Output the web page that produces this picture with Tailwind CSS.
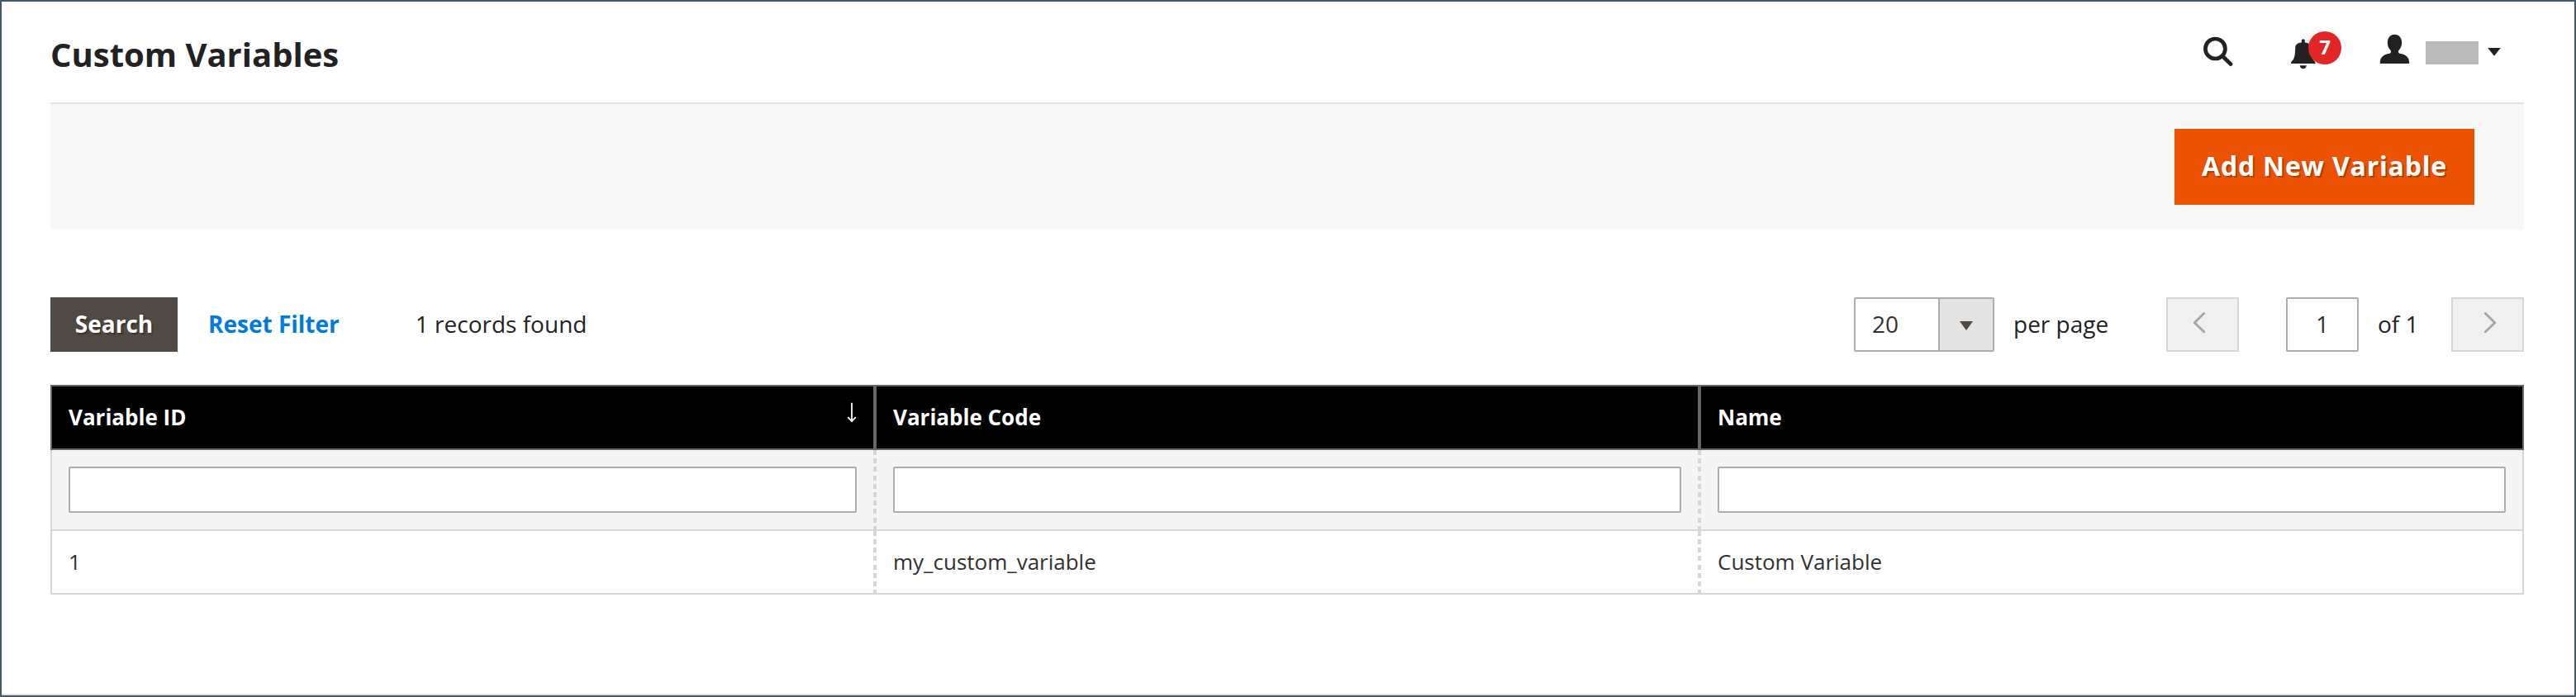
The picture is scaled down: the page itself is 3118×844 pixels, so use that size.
<!DOCTYPE html>
<html lang="en">
<head>
<meta charset="utf-8">
<title>Custom Variables</title>
<script src="https://cdn.jsdelivr.net/npm/@tailwindcss/browser@4"></script>
</head>
<body class="bg-white">
<div class="h-[844px] w-[3118px] overflow-hidden border-2 border-[#455a64] font-['Open_Sans','Noto_Sans',sans-serif] text-[28px] leading-none text-[#222]">
 <div class="flex h-[840px] flex-col border-b-2 border-[#dfe0e0] pr-[61px] pl-[59px]">
  <header class="flex h-[124px] shrink-0 items-start justify-between border-b-2 border-[#e3e3e3]">
    <h1 class="mt-[37px] text-[40px] leading-[54px] font-bold">Custom Variables</h1>
    <div class="mr-[28px] flex items-start">
      <svg class="mt-[42px] mr-[70px] h-[37px] w-[36px]" viewBox="0 0 36 37" fill="none" stroke="#222">
        <circle cx="14.4" cy="15" r="12" stroke-width="4.7"/>
        <path d="M23.2 24 33 33.6" stroke-width="4.8" stroke-linecap="round"/>
      </svg>
      <div class="relative mt-[36px] mr-[46px] h-[46px] w-[61px]">
        <svg class="mt-[9px] h-[37px] w-[30px]" viewBox="0 0 30 37" fill="#222">
          <path d="M12.8 4.6V2.2a2 2 0 0 1 4 0v2.4c4.2.4 7.2 2 7.4 6.2.3 8.200.6 13 4.200 16.200.8.7 1.200 1.500 1.200 3H0c0-1.500.4-2.300 1.100-3C4.700 23.800 5 19 5.200 10.800c.2-4.200 3.400-5.800 7.600-6.200Z"/>
          <path d="M10.600 32.200h8.300c-.6 2.500-2 4-4.150 4s-3.550-1.500-4.150-4Z"/>
        </svg>
        <span class="absolute top-0 right-0 flex size-10 items-center justify-center rounded-full bg-[#e22626] pb-[2px] text-[24px] font-bold text-white">7</span>
      </div>
      <svg class="mt-[39px] mr-[19px] h-[37px] w-[37px]" viewBox="0 0 37 37" fill="#222">
        <path d="M18.500.700c5.300 0 8.600 4 8.600 9.800 0 4.200-1.200 6.900-3.300 9-.8.8-.9 1.900-.6 2.900.4 1 1.400 1.400 2.700 1.600 6 .8 10.300 5.200 10.300 10.600 0 1-.5 1.500-1.500 1.500H2.300c-1 0-1.500-.5-1.500-1.500C.8 29.200 5.100 24.800 11.100 24c1.300-.2 2.300-.6 2.700-1.600.3-1 .2-2.100-.6-2.900-2.100-2.100-3.300-4.800-3.300-9C9.900 4.700 13.200.7 18.500.7Z"/>
      </svg>
      <div class="mt-[48px] h-7 w-16 bg-[#bababa]"></div>
      <svg class="mt-[56px] ml-[11px] h-[10px] w-4" viewBox="0 0 16 10" fill="#222"><path d="M.2 0h15.600L8 9.800Z"/></svg>
    </div>
  </header>

  <section class="flex h-[152px] shrink-0 items-center justify-end bg-[#f8f8f8] pr-[60px]">
    <button class="h-[92px] w-[363px] bg-[#eb5202] pb-[3px] text-[32px] font-bold tracking-[0.8px] text-white [text-shadow:2px_2px_0_rgba(0,0,0,0.25)]">Add New Variable</button>
  </section>

  <section class="mt-[82px] flex h-[66px] shrink-0 items-center justify-between">
    <div class="flex h-full items-center">
      <button class="h-full w-[154px] bg-[#514943] pb-[2px] font-bold text-white [text-shadow:2px_2px_2px_rgba(0,0,0,0.3)]">Search</button>
      <a class="ml-[37px] pb-[2px] font-bold text-[#007bdb]">Reset Filter</a>
      <span class="ml-[92px] pb-[2px]">1 records found</span>
    </div>
    <div class="flex h-full items-center">
      <div class="flex h-full w-[170px] overflow-hidden rounded-[2px] border-2 border-[#adadad] text-[#303030]">
        <div class="flex flex-1 items-center pb-[2px] pl-5">20</div>
        <div class="flex w-[66px] items-center justify-center border-l-2 border-[#adadad] bg-[#e3e3e3]">
          <svg class="mt-[2px] h-[11px] w-4" viewBox="0 0 16 11" fill="#514943"><path d="M0 0h16L8 11Z"/></svg>
        </div>
      </div>
      <span class="ml-[23px] w-[185px] pb-[2px]">per page</span>
      <button class="flex h-full w-[88px] items-start justify-center border-2 border-[#d6d6d6] bg-[#f0f0f0] pt-4 pr-[8px]">
        <svg class="h-[26px] w-4" viewBox="0 0 16 26" fill="none" stroke="#a8a4a1" stroke-width="2.8" stroke-linecap="round" stroke-linejoin="round"><path d="M13.700 1.500 2.200 12.800l11.500 11"/></svg>
      </button>
      <div class="ml-[57px] flex h-full w-[88px] items-center justify-center rounded-[2px] border-2 border-[#adadad] pb-[2px] text-[#303030]">1</div>
      <span class="ml-[23px] w-[89px] pb-[2px]">of 1</span>
      <button class="flex h-full w-[88px] items-start justify-center border-2 border-[#d6d6d6] bg-[#f0f0f0] pt-4 pl-[6px]">
        <svg class="h-[26px] w-4" viewBox="0 0 16 26" fill="none" stroke="#a8a4a1" stroke-width="2.8" stroke-linecap="round" stroke-linejoin="round"><path d="m2.300 1.500 11.500 11.300-11.500 11"/></svg>
      </button>
    </div>
  </section>

  <section class="mt-10 shrink-0 text-[26px]">
    <div class="flex h-[79px] border-2 border-[#666] bg-black font-bold text-white">
      <div class="flex w-[994px] items-center justify-between pb-px px-5">Variable ID
        <svg class="mb-[11px] h-[25px] w-[12px]" viewBox="0 0 12 25" fill="none" stroke="#fff" stroke-width="1.8"><path d="M6 .8v22.500M1.200 18.200 6 23.200l4.800-5"/></svg>
      </div>
      <div class="w-1 bg-[#666]"></div>
      <div class="flex w-[994px] items-center pb-px pl-5">Variable Code</div>
      <div class="w-1 bg-[#666]"></div>
      <div class="flex w-[994px] items-center pb-px pl-5">Name</div>
    </div>
    <div class="flex h-[98px] border-x-2 border-b-2 border-[#d6d6d6] bg-[#f5f5f5]">
      <div class="w-[994px] p-5"><div class="h-[56px] rounded-[2px] border-2 border-[#adadad] bg-white"></div></div>
      <div class="w-1 bg-[repeating-linear-gradient(to_bottom,#d6d6d6_0_6px,transparent_6px_10.2px)]"></div>
      <div class="w-[994px] p-5"><div class="h-[56px] rounded-[2px] border-2 border-[#adadad] bg-white"></div></div>
      <div class="w-1 bg-[repeating-linear-gradient(to_bottom,#d6d6d6_0_6px,transparent_6px_10.2px)]"></div>
      <div class="w-[994px] p-5"><div class="h-[56px] rounded-[2px] border-2 border-[#adadad] bg-white"></div></div>
    </div>
    <div class="flex h-[77px] border-x-2 border-b-2 border-[#d6d6d6] text-[#303030]">
      <div class="flex w-[994px] items-center pb-px pl-5">1</div>
      <div class="w-1 bg-[repeating-linear-gradient(to_bottom,#d6d6d6_0_6px,transparent_6px_10.150px)]"></div>
      <div class="flex w-[994px] items-center pb-px pl-5">my_custom_variable</div>
      <div class="w-1 bg-[repeating-linear-gradient(to_bottom,#d6d6d6_0_6px,transparent_6px_10.150px)]"></div>
      <div class="flex w-[994px] items-center pb-px pl-5">Custom Variable</div>
    </div>
  </section>
 </div>
</div>
</body>
</html>
